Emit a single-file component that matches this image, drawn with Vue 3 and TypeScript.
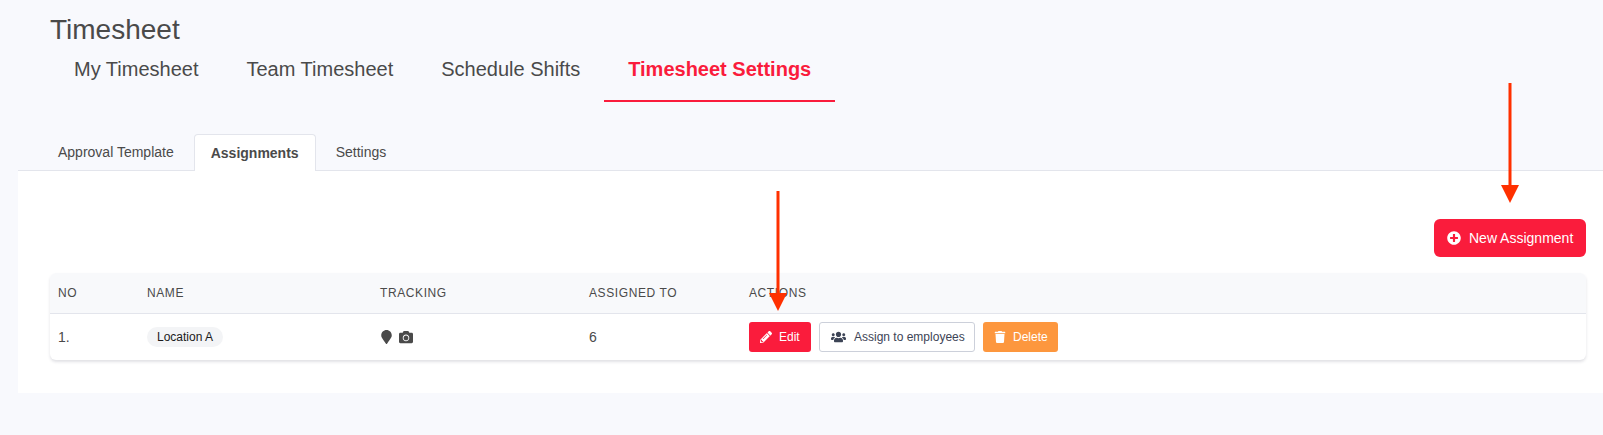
<script setup lang="ts">
interface Tab {
  label: string;
  active?: boolean;
}

const mainTabs: Tab[] = [
  { label: "My Timesheet" },
  { label: "Team Timesheet" },
  { label: "Schedule Shifts" },
  { label: "Timesheet Settings", active: true },
];

const subTabs: Tab[] = [
  { label: "Approval Template" },
  { label: "Assignments", active: true },
  { label: "Settings" },
];

const headers = ["NO", "NAME", "TRACKING", "ASSIGNED TO", "ACTIONS"];
</script>

<template>
  <div class="page">
    <h1 class="title">Timesheet</h1>

    <nav class="main-tabs">
      <a
        v-for="tab in mainTabs"
        :key="tab.label"
        class="main-tab"
        :class="{ active: tab.active }"
        >{{ tab.label }}</a
      >
    </nav>

    <div class="sub-tabs">
      <a
        v-for="tab in subTabs"
        :key="tab.label"
        class="sub-tab"
        :class="{ active: tab.active }"
        >{{ tab.label }}</a
      >
    </div>

    <section class="panel">
      <div class="toolbar">
        <button class="btn btn-new">
          <svg class="icon-new" viewBox="0 0 512 512" fill="currentColor">
            <path
              d="M256 8C119 8 8 119 8 256s111 248 248 248 248-111 248-248S393 8 256 8zm144 276c0 6.6-5.4 12-12 12h-92v92c0 6.6-5.4 12-12 12h-56c-6.6 0-12-5.4-12-12v-92h-92c-6.6 0-12-5.4-12-12v-56c0-6.6 5.4-12 12-12h92v-92c0-6.6 5.4-12 12-12h56c6.6 0 12 5.4 12 12v92h92c6.6 0 12 5.4 12 12v56z"
            />
          </svg>
          New Assignment
        </button>
      </div>

      <div class="table">
        <div class="row head">
          <div v-for="h in headers" :key="h" class="cell">{{ h }}</div>
        </div>
        <div class="row body">
          <div class="cell">1.</div>
          <div class="cell"><span class="pill">Location A</span></div>
          <div class="cell tracking">
            <svg class="icon-marker" viewBox="0 0 384 512" fill="currentColor">
              <path
                d="M172.268 501.67C26.97 291.031 0 269.413 0 192 0 85.961 85.961 0 192 0s192 85.961 192 192c0 77.413-26.97 99.031-172.268 309.67-9.535 13.774-29.93 13.773-39.464 0z"
              />
            </svg>
            <svg class="icon-camera" viewBox="0 0 512 512" fill="currentColor">
              <path
                d="M512 144v288c0 26.5-21.5 48-48 48H48c-26.5 0-48-21.5-48-48V144c0-26.5 21.5-48 48-48h88l12.3-32.9c7-18.7 24.9-31.1 44.9-31.1h125.5c20 0 37.9 12.4 44.9 31.1L376 96h88c26.5 0 48 21.5 48 48zM376 288c0-66.2-53.8-120-120-120s-120 53.8-120 120 53.8 120 120 120 120-53.8 120-120zm-32 0c0 48.5-39.5 88-88 88s-88-39.5-88-88 39.5-88 88-88 88 39.5 88 88z"
              />
            </svg>
          </div>
          <div class="cell">6</div>
          <div class="cell actions">
            <button class="btn btn-sm btn-edit">
              <svg class="icon-sm" viewBox="0 0 512 512" fill="currentColor">
                <path
                  d="M497.9 142.1l-46.1 46.1c-4.7 4.7-12.3 4.7-17 0l-111-111c-4.7-4.7-4.7-12.3 0-17l46.1-46.1c18.7-18.7 49.1-18.7 67.9 0l60.1 60.1c18.8 18.7 18.8 49.1 0 67.9zM284.2 99.8L21.6 362.4.4 483.9c-2.9 16.4 11.4 30.6 27.8 27.8l121.5-21.3 262.6-262.6c4.7-4.7 4.7-12.3 0-17l-111-111c-4.8-4.7-12.4-4.7-17.1 0zM124.1 339.9c-5.5-5.5-5.5-14.3 0-19.8l154-154c5.5-5.5 14.3-5.5 19.8 0s5.5 14.3 0 19.8l-154 154c-5.5 5.5-14.3 5.5-19.8 0zM88 424h48v36.3l-64.5 11.3-31.1-31.1L51.7 376H88v48z"
                />
              </svg>
              Edit
            </button>
            <button class="btn btn-sm btn-assign">
              <svg class="icon-users" viewBox="0 0 640 512" fill="currentColor">
                <path
                  d="M96 224c35.3 0 64-28.7 64-64s-28.7-64-64-64-64 28.7-64 64 28.7 64 64 64zm448 0c35.3 0 64-28.7 64-64s-28.7-64-64-64-64 28.7-64 64 28.7 64 64 64zm32 32h-64c-17.6 0-33.5 7.1-45.1 18.6 40.3 22.1 68.9 62 75.1 109.4h66c17.7 0 32-14.3 32-32v-32c0-35.3-28.7-64-64-64zm-256 0c61.9 0 112-50.1 112-112S381.9 32 320 32 208 82.1 208 144s50.1 112 112 112zm76.8 32h-8.3c-20.8 10-43.9 16-68.5 16s-47.6-6-68.5-16h-8.3C179.6 288 128 339.6 128 403.2V432c0 26.5 21.5 48 48 48h288c26.5 0 48-21.5 48-48v-28.8c0-63.6-51.6-115.2-115.2-115.2zm-223.7-13.4C161.5 263.1 145.6 256 128 256H64c-35.3 0-64 28.7-64 64v32c0 17.7 14.3 32 32 32h65.9c6.3-47.4 34.9-87.3 75.2-109.4z"
                />
              </svg>
              Assign to employees
            </button>
            <button class="btn btn-sm btn-delete">
              <svg class="icon-trash" viewBox="0 0 448 512" fill="currentColor">
                <path
                  d="M432 32H312l-9.4-18.7A24 24 0 0 0 281.1 0H166.8a23.72 23.72 0 0 0-21.4 13.3L136 32H16A16 16 0 0 0 0 48v32a16 16 0 0 0 16 16h416a16 16 0 0 0 16-16V48a16 16 0 0 0-16-16zM53.2 467a48 48 0 0 0 47.9 45h245.8a48 48 0 0 0 47.9-45L416 128H32z"
                />
              </svg>
              Delete
            </button>
          </div>
        </div>
      </div>
    </section>

    <!-- annotation arrows drawn over the page -->
    <svg class="arrow arrow-new" viewBox="0 0 18 120">
      <rect x="7.5" y="0" width="3" height="104" />
      <polygon points="0,102 18,102 9,120" />
    </svg>
    <svg class="arrow arrow-edit" viewBox="0 0 18 120">
      <rect x="7.5" y="0" width="3" height="104" />
      <polygon points="0,102 18,102 9,120" />
    </svg>
  </div>
</template>

<style scoped>
.page {
  position: relative;
  height: 435px;
  overflow: hidden;
  background: #f8f9fd;
  font-family: "Liberation Sans", Arial, sans-serif;
  color: #4a4a4a;
}

.title {
  margin: 0 0 0 50px;
  padding-top: 14px;
  font-size: 28px;
  line-height: 32px;
  font-weight: 400;
  color: #4a4a4a;
}

.main-tabs {
  display: flex;
  margin-left: 50px;
  padding-top: 12px;
}

.main-tab {
  padding: 0 24px 20px;
  font-size: 20px;
  line-height: 22px;
  border-bottom: 2px solid transparent;
}

.main-tab.active {
  color: #fa1c3c;
  font-weight: 700;
  border-bottom-color: #fa1c3c;
}

.sub-tabs {
  display: flex;
  margin: 32px 0 0 18px;
  padding-left: 24px;
  gap: 4px;
  height: 37px;
  box-sizing: border-box;
  border-bottom: 1px solid #e3e5ec;
}

.sub-tab {
  padding: 0 16px;
  font-size: 14px;
  line-height: 37px;
  height: 36px;
  box-sizing: border-box;
}

.sub-tab.active {
  background: #fff;
  border: 1px solid #e3e5ec;
  border-bottom: none;
  border-radius: 4px 4px 0 0;
  font-weight: 700;
  height: 37px;
}

.panel {
  margin-left: 18px;
  padding: 48px 17px 33px 32px;
  background: #fff;
}

.toolbar {
  display: flex;
  justify-content: flex-end;
  margin-bottom: 16px;
}

.btn {
  display: inline-flex;
  align-items: center;
  box-sizing: border-box;
  border: none;
  font-family: inherit;
  color: #fff;
  white-space: nowrap;
}

.btn-new {
  width: 152px;
  height: 38px;
  padding: 0 13px;
  gap: 8px;
  font-size: 14px;
  border-radius: 6px;
  background: #fa1c3c;
}

.icon-new {
  width: 14px;
  height: 14px;
  flex: none;
}

.table {
  border-radius: 6px;
  box-shadow: 0 2px 3px rgba(40, 45, 70, 0.14);
}

.row {
  display: grid;
  grid-template-columns: 97px 233px 209px 160px 1fr;
  align-items: center;
}

.head {
  height: 41px;
  background: #f8f9fb;
  border-bottom: 1px solid #e3e5ec;
  border-radius: 6px 6px 0 0;
  box-sizing: border-box;
  font-size: 12px;
  letter-spacing: 0.6px;
}

.body {
  height: 46px;
  font-size: 14px;
}

.cell:first-child {
  padding-left: 8px;
}

.pill {
  display: inline-block;
  padding: 0 10px;
  line-height: 20px;
  border-radius: 10px;
  background: #f3f4f6;
  font-size: 12px;
  color: #1a1a1a;
}

.tracking {
  display: flex;
  align-items: center;
  gap: 7px;
  padding-left: 1px;
}

.icon-marker {
  width: 11px;
  height: 14px;
}

.icon-camera {
  width: 14px;
  height: 14px;
}

.actions {
  display: flex;
  gap: 8px;
}

.btn-sm {
  height: 30px;
  font-size: 12px;
  border-radius: 3px;
}

.icon-sm,
.icon-trash {
  width: 12px;
  height: 12px;
  flex: none;
}

.icon-users {
  width: 15px;
  height: 12px;
  flex: none;
}

.btn-edit {
  width: 62px;
  padding: 0 11px;
  gap: 7px;
  background: #fa1c3c;
}

.btn-assign {
  width: 156px;
  padding: 0 11px;
  gap: 8px;
  background: #fff;
  border: 1px solid #ccd0da;
  color: #3d4456;
}

.btn-delete {
  width: 75px;
  padding: 0 11px;
  gap: 7px;
  background: #fd973e;
}

.arrow {
  position: absolute;
  width: 18px;
  height: 120px;
  fill: #ff3000;
}

.arrow-new {
  left: 1501px;
  top: 83px;
}

.arrow-edit {
  left: 769px;
  top: 191px;
}
</style>

<style>
body {
  background: #f8f9fd;
}
</style>
